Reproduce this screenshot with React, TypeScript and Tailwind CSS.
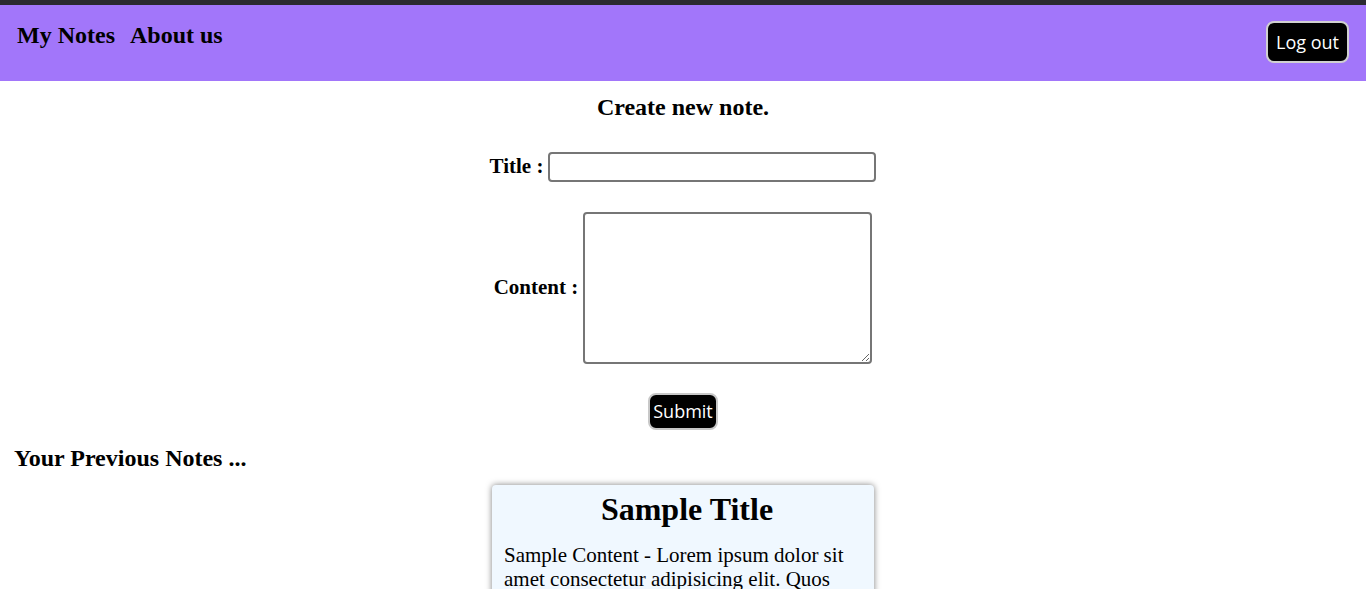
import React, { useState } from 'react';

const serif = { fontFamily: '"Liberation Serif", "Times New Roman", serif' };

const NavBar: React.FC = () => (
  <div className="bg-[#a276fa] h-[76px] flex items-start justify-between pl-[17px] pr-[17px]">
    <div className="flex items-center gap-[15px] pt-[12px] text-[24px] font-bold text-black">
      <a href="#">My Notes</a>
      <a href="#">About us</a>
    </div>
    <button className="mt-[16px] h-[42px] px-[8px] rounded-[8px] border-2 border-[#d0d0d0] bg-black text-white text-[18px] font-['Open_Sans',sans-serif]">
      Log out
    </button>
  </div>
);

const NoteCard: React.FC<{ title: string; content: string }> = ({ title, content }) => (
  <div className="w-[382px] bg-[#f0f8ff] rounded-[4px] shadow-[0_0_6px_rgba(0,0,0,0.5)] px-[12px] pt-[6px] pb-[12px]">
    <h2 className="pl-[8px] text-center text-[32px] font-bold leading-[36px]">{title}</h2>
    <p className="mt-[16px] text-[21px] leading-[24px]">{content}</p>
  </div>
);

export default function App() {
  const [title, setTitle] = useState('');
  const [content, setContent] = useState('');

  return (
    <div className="min-h-screen bg-white text-black" style={serif}>
      <div className="h-[5px] bg-[#2b2a30]" />
      <NavBar />

      <div className="flex flex-col items-center">
        <h2 className="mt-[13px] text-[24px] font-bold leading-[27px]">Create new note.</h2>

        <div className="mt-[30px] flex items-center gap-[5px]">
          <label className="text-[21px] font-bold">Title :</label>
          <input
            value={title}
            onChange={e => setTitle(e.target.value)}
            className="w-[328px] h-[30px] border-2 border-[#767676] rounded-[4px] px-1 outline-none"
          />
        </div>

        <div className="mt-[29px] flex items-center gap-[5px]">
          <label className="text-[21px] font-bold">Content :</label>
          <textarea
            value={content}
            onChange={e => setContent(e.target.value)}
            className="w-[289px] h-[152px] border-2 border-[#767676] rounded-[4px] p-1 outline-none"
          />
        </div>

        <button className="mt-[29px] h-[37px] px-[3px] rounded-[8px] border-2 border-[#c8c8c8] bg-black text-white text-[18px] font-['Open_Sans',sans-serif]">
          Submit
        </button>
      </div>

      <h2 className="mt-[15px] pl-[14px] text-[24px] font-bold leading-[27px]">Your Previous Notes ...</h2>

      <div className="mt-[13px] flex justify-center">
        <NoteCard
          title="Sample Title"
          content="Sample Content - Lorem ipsum dolor sit amet consectetur adipisicing elit. Quos voluptatum, nesciunt placeat quaerat fugiat ratione eius."
        />
      </div>
    </div>
  );
}
